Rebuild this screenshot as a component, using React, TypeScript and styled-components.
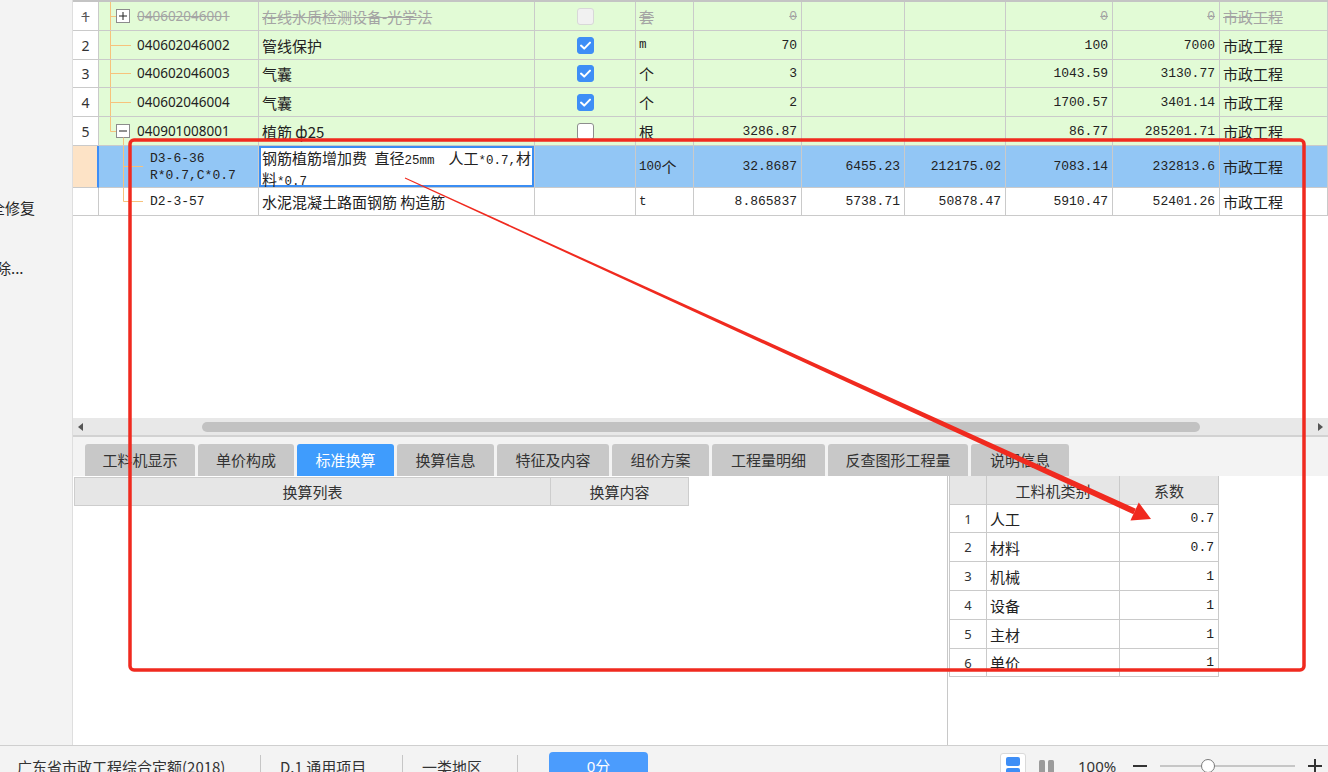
import React from 'react'
import styled, { createGlobalStyle } from 'styled-components'

const CJK = `"Noto Sans CJK SC", "Noto Sans", sans-serif`
const SANS = `"Noto Sans", "Noto Sans CJK SC", sans-serif`
const MONO = `"Liberation Mono", "Noto Sans CJK SC", monospace`

const GRID = '#cacaca'
const TREE = '#f7c27c'
const GREEN = '#e2fbd6'
const SELECTED = '#92c6f5'
const BLUE = '#3e8ef6'
const RED = '#f02a1f'

const COLS = [26, 160, 276, 101, 58, 108, 103, 101, 107, 107, 108]

const GlobalStyle = createGlobalStyle`
  html, body {
    margin: 0;
    padding: 0;
    width: 1328px;
    height: 772px;
    overflow: hidden;
    background: #fff;
  }
  body {
    font-family: ${SANS};
    color: #222;
  }
  * { box-sizing: border-box; }
`

const Page = styled.div`
  width: 1328px;
  height: 772px;
  display: flex;
  flex-direction: column;
  overflow: hidden;
`

const Workspace = styled.div`
  display: flex;
  height: 746px;
  flex: none;
  border-bottom: 1px solid #cfcfcf;
`

const Sidebar = styled.div`
  width: 73px;
  flex: none;
  background: #f3f3f3;
  border-right: 1px solid #dedede;
  padding-top: 198px;
  display: flex;
  flex-direction: column;
  gap: 40px;
  overflow: hidden;
`

const SideItem = styled.div<{ $shift: number }>`
  margin-left: ${(p) => p.$shift}px;
  font-family: ${CJK};
  font-size: 15px;
  line-height: 20px;
  color: #262626;
  white-space: nowrap;
`

const Main = styled.div`
  flex: 1;
  min-width: 0;
  display: flex;
  flex-direction: column;
`

const GridArea = styled.div`
  height: 418px;
  flex: none;
  border-top: 2px solid #c4c4c4;
  background: #fff;
  overflow: hidden;
`

const GridRow = styled.div<{ $h: number; $bg: string }>`
  display: grid;
  grid-template-columns: ${COLS.map((c) => c + 'px').join(' ')};
  height: ${(p) => p.$h}px;
  background: ${(p) => p.$bg};
`

type Align = 'left' | 'right' | 'center'
type Face = 'mono' | 'sans' | 'cjk'

const Cell = styled.div<{ $align?: Align; $font?: Face; $struck?: boolean }>`
  display: flex;
  align-items: center;
  justify-content: ${(p) => (p.$align === 'right' ? 'flex-end' : p.$align === 'center' ? 'center' : 'flex-start')};
  padding: ${(p) => (p.$align === 'right' ? '0 4px 0 0' : p.$align === 'center' ? '0' : '0 0 0 3px')};
  border-right: 1px solid ${GRID};
  border-bottom: 1px solid ${GRID};
  font-family: ${(p) => (p.$font === 'mono' ? MONO : p.$font === 'sans' ? SANS : CJK)};
  font-size: ${(p) => (p.$font === 'mono' ? '13px' : p.$font === 'sans' ? '13px' : '15px')};
  color: ${(p) => (p.$struck ? '#a4a4a4' : '#222')};
  text-decoration: ${(p) => (p.$struck ? 'line-through' : 'none')};
  white-space: nowrap;
  overflow: hidden;
`

const NoCell = styled(Cell)<{ $selected?: boolean }>`
  background: ${(p) => (p.$selected ? '#fde3c6' : '#fff')};
  border-right: ${(p) => (p.$selected ? `2px solid ${BLUE}` : `1px solid ${GRID}`)};
  font-family: ${SANS};
  font-size: 14px;
  color: ${(p) => (p.$struck ? '#555' : '#333')};
`

const CodeCell = styled(Cell)`
  padding: 0;
  align-items: stretch;
`

const CodeText = styled.div<{ $mono?: boolean; $struck?: boolean }>`
  align-self: center;
  font-family: ${(p) => (p.$mono ? MONO : SANS)};
  font-size: ${(p) => (p.$mono ? '13px' : '13.5px')};
  line-height: 17px;
  color: ${(p) => (p.$struck ? '#a4a4a4' : '#222')};
`

const EditCell = styled(Cell)`
  padding: 0;
  align-items: stretch;
`

const EditBox = styled.div`
  flex: 1;
  border: 2px solid #3b8ef3;
  background: #fff;
  padding: 1px 1px 0 1px;
  font-family: ${CJK};
  font-size: 15px;
  line-height: 17px;
  color: #222;
  display: flex;
  flex-direction: column;
`

const EditLine = styled.div`
  display: flex;
  justify-content: space-between;
  white-space: pre;
`

const Latin = styled.span`
  font-family: ${MONO};
  font-size: 12.5px;
`

const Box = styled.span<{ $state: 'on' | 'off' | 'disabled' }>`
  width: 17px;
  height: 17px;
  border-radius: 3px;
  display: flex;
  align-items: center;
  justify-content: center;
  background: ${(p) => (p.$state === 'on' ? BLUE : p.$state === 'off' ? '#fff' : '#f1f1f1')};
  border: 1px solid ${(p) => (p.$state === 'on' ? BLUE : p.$state === 'off' ? '#8d8d8d' : '#d8d8d8')};
`

const HScroll = styled.div`
  height: 19px;
  flex: none;
  background: #e8e8e8;
  border-bottom: 2px solid #d2d2d2;
  display: flex;
  align-items: center;
  padding: 0 5px;
`

const ArrowLeft = styled.span`
  width: 0;
  height: 0;
  border-top: 4px solid transparent;
  border-bottom: 4px solid transparent;
  border-right: 5px solid #555;
`

const ArrowRight = styled.span`
  margin-left: auto;
  width: 0;
  height: 0;
  border-top: 4px solid transparent;
  border-bottom: 4px solid transparent;
  border-left: 5px solid #555;
`

const Thumb = styled.span`
  margin-left: 119px;
  width: 998px;
  height: 10px;
  border-radius: 5px;
  background: #c2c2c2;
`

const TabBar = styled.div`
  height: 39px;
  flex: none;
  background: #f3f3f3;
  display: flex;
  align-items: flex-end;
  gap: 3px;
  padding-left: 12px;
`

const Tab = styled.div<{ $active?: boolean; $w: number }>`
  width: ${(p) => p.$w}px;
  height: 32px;
  flex: none;
  text-align: center;
  font-family: ${CJK};
  font-size: 15px;
  line-height: 31px;
  color: ${(p) => (p.$active ? '#fff' : '#333')};
  background: ${(p) => (p.$active ? '#3f9cfd' : '#c8c8c8')};
  border-radius: 3px 3px 0 0;
  white-space: nowrap;
`

const Bottom = styled.div`
  height: 269px;
  flex: none;
  display: flex;
  background: #fff;
`

const ListPane = styled.div`
  width: 875px;
  flex: none;
  border-right: 1px solid #c8c8c8;
  padding: 1px 0 0 1px;
`

const ListHead = styled.div`
  display: grid;
  grid-template-columns: 477px 138px;
  height: 29px;
`

const HeadCell = styled.div`
  display: flex;
  align-items: center;
  justify-content: center;
  background: #e6e6e6;
  border: 1px solid #cdcdcd;
  border-left: none;
  font-family: ${CJK};
  font-size: 15px;
  color: #333;
  &:first-child {
    border-left: 1px solid #cdcdcd;
  }
`

const FactorPane = styled.div`
  flex: 1;
  padding-left: 1px;
`

const FactorGrid = styled.div`
  display: grid;
  grid-template-columns: 37px 133px 99px;
  grid-template-rows: 29px 28px 29px 29px 29px 29px 28px;
  width: 269px;
  border-left: 1px solid ${GRID};
`

const FactorHead = styled.div`
  display: flex;
  align-items: center;
  justify-content: center;
  background: #e6e6e6;
  border-right: 1px solid ${GRID};
  border-bottom: 1px solid ${GRID};
  font-family: ${CJK};
  font-size: 15px;
  color: #333;
`

const FactorCell = styled(Cell)`
  background: #fff;
`

const IndexCell = styled(Cell)`
  font-family: ${SANS};
  font-size: 13px;
  color: #333;
`

const StatusBar = styled.div`
  height: 40px;
  flex: none;
  background: #f3f3f3;
  display: flex;
  align-items: center;
  font-family: ${CJK};
  font-size: 15px;
  color: #333;
`

const StatusText = styled.div<{ $w: number; $pl: number }>`
  width: ${(p) => p.$w}px;
  padding-left: ${(p) => p.$pl}px;
  flex: none;
  white-space: nowrap;
`

const StatusSep = styled.span`
  width: 1px;
  height: 22px;
  flex: none;
  background: #c6c6c6;
`

const ScoreButton = styled.div`
  margin-left: 31px;
  width: 99px;
  height: 28px;
  flex: none;
  border-radius: 4px;
  background: #4b9cfd;
  color: #fff;
  text-align: center;
  line-height: 28px;
  font-family: ${SANS};
`

const Tools = styled.div`
  margin-left: auto;
  padding-right: 6px;
  display: flex;
  align-items: center;
`

const ViewToggle = styled.div`
  width: 26px;
  height: 26px;
  background: #fff;
  border: 1px solid #dadada;
  border-radius: 3px;
  display: flex;
  justify-content: center;
  padding-top: 3px;
`

const Gap = styled.span<{ $w: number }>`
  width: ${(p) => p.$w}px;
  flex: none;
`

const ZoomText = styled.span`
  width: 40px;
  font-family: ${SANS};
  font-size: 15px;
  color: #333;
`

const Slider = styled.div`
  position: relative;
  width: 135px;
  height: 14px;
  display: flex;
  align-items: center;
`

const SliderTrack = styled.span`
  width: 100%;
  height: 2px;
  background: #c6c6c6;
`

const SliderKnob = styled.span`
  position: absolute;
  left: 41px;
  top: 0;
  width: 14px;
  height: 14px;
  border-radius: 50%;
  background: #fff;
  border: 1.5px solid #7a7a7a;
`

const Overlay = styled.svg`
  position: fixed;
  left: 0;
  top: 0;
  width: 1328px;
  height: 772px;
  pointer-events: none;
`

type TreeKind = 'plus' | 'branch' | 'minus' | 'child' | 'last'

type Bill = {
  no: string
  tree: TreeKind
  code: string[]
  name?: string
  check?: 'on' | 'off' | 'disabled'
  unit: string
  vals: string[]
  kind: string
  h: number
  tone: 'green' | 'selected' | 'plain'
  struck?: boolean
  editing?: boolean
}

const bills: Bill[] = [
  { no: '1', tree: 'plus', code: ['040602046001'], name: '在线水质检测设备-光学法', check: 'disabled', unit: '套', vals: ['0', '', '', '0', '0'], kind: '市政工程', h: 29, tone: 'green', struck: true },
  { no: '2', tree: 'branch', code: ['040602046002'], name: '管线保护', check: 'on', unit: 'm', vals: ['70', '', '', '100', '7000'], kind: '市政工程', h: 29, tone: 'green' },
  { no: '3', tree: 'branch', code: ['040602046003'], name: '气囊', check: 'on', unit: '个', vals: ['3', '', '', '1043.59', '3130.77'], kind: '市政工程', h: 28, tone: 'green' },
  { no: '4', tree: 'branch', code: ['040602046004'], name: '气囊', check: 'on', unit: '个', vals: ['2', '', '', '1700.57', '3401.14'], kind: '市政工程', h: 29, tone: 'green' },
  { no: '5', tree: 'minus', code: ['040901008001'], name: '植筋 ф25', check: 'off', unit: '根', vals: ['3286.87', '', '', '86.77', '285201.71'], kind: '市政工程', h: 29, tone: 'green' },
  { no: '', tree: 'child', code: ['D3-6-36', 'R*0.7,C*0.7'], editing: true, unit: '100个', vals: ['32.8687', '6455.23', '212175.02', '7083.14', '232813.6'], kind: '市政工程', h: 42, tone: 'selected' },
  { no: '', tree: 'last', code: ['D2-3-57'], name: '水泥混凝土路面钢筋 构造筋', unit: 't', vals: ['8.865837', '5738.71', '50878.47', '5910.47', '52401.26'], kind: '市政工程', h: 28, tone: 'plain' },
]

const tabs: [string, number][] = [
  ['工料机显示', 110],
  ['单价构成', 96],
  ['标准换算', 97],
  ['换算信息', 97],
  ['特征及内容', 112],
  ['组价方案', 97],
  ['工程量明细', 113],
  ['反查图形工程量', 140],
  ['说明信息', 98],
]

const factors = [
  ['1', '人工', '0.7'],
  ['2', '材料', '0.7'],
  ['3', '机械', '1'],
  ['4', '设备', '1'],
  ['5', '主材', '1'],
  ['6', '单价', '1'],
]

function Mixed({ text }: { text: string }) {
  const parts = text.split(/([\x20-\x7e]+)/).filter(Boolean)
  return (
    <>
      {parts.map((part, i) =>
        /^[\x20-\x7e]+$/.test(part) ? <Latin key={i}>{part}</Latin> : <span key={i}>{part}</span>
      )}
    </>
  )
}

function Tree({ kind, h }: { kind: TreeKind; h: number }) {
  const m = Math.floor(h / 2) + 0.5
  const child = kind === 'child' || kind === 'last'
  const w = child ? 51 : 38
  return (
    <svg width={w} height={h} style={{ flex: 'none' }}>
      {kind === 'plus' || kind === 'branch' ? <line x1={11.5} y1={0} x2={11.5} y2={h} stroke={TREE} /> : null}
      {kind === 'minus' ? <line x1={11.5} y1={0} x2={11.5} y2={m} stroke={TREE} /> : null}
      {kind === 'branch' ? <line x1={11.5} y1={m} x2={32} y2={m} stroke={TREE} /> : null}
      {kind === 'plus' || kind === 'minus' ? (
        <>
          <line x1={11.5} y1={m} x2={17} y2={m} stroke={TREE} />
          <rect x={17.5} y={m - 7} width={13} height={13} fill="#fff" stroke="#8c8c8c" />
          <line x1={20} y1={m - 0.5} x2={28} y2={m - 0.5} stroke="#222" />
          {kind === 'plus' ? <line x1={24} y1={m - 4.5} x2={24} y2={m + 3.5} stroke="#222" /> : null}
        </>
      ) : null}
      {kind === 'minus' ? <line x1={24.5} y1={m + 6} x2={24.5} y2={h} stroke={TREE} /> : null}
      {kind === 'child' ? <line x1={24.5} y1={0} x2={24.5} y2={h} stroke={TREE} /> : null}
      {kind === 'last' ? <line x1={24.5} y1={0} x2={24.5} y2={m} stroke={TREE} /> : null}
      {child ? <line x1={24.5} y1={m} x2={44} y2={m} stroke={TREE} /> : null}
    </svg>
  )
}

function CheckBox({ state }: { state: 'on' | 'off' | 'disabled' }) {
  return (
    <Box $state={state}>
      {state === 'on' ? (
        <svg width="11" height="9" viewBox="0 0 11 9">
          <path d="M1 4.6 L4.2 7.6 L10 1.6" stroke="#fff" strokeWidth="2" fill="none" strokeLinecap="round" strokeLinejoin="round" />
        </svg>
      ) : null}
    </Box>
  )
}

function BillRow({ bill }: { bill: Bill }) {
  const bg = bill.tone === 'green' ? GREEN : bill.tone === 'selected' ? SELECTED : '#fff'
  const child = bill.tree === 'child' || bill.tree === 'last'
  return (
    <GridRow $h={bill.h} $bg={bg}>
      <NoCell $align="center" $selected={bill.tone === 'selected'} $struck={bill.struck}>
        {bill.no}
      </NoCell>
      <CodeCell>
        <Tree kind={bill.tree} h={bill.h - 1} />
        <CodeText $mono={child} $struck={bill.struck}>
          {bill.code.map((c) => (
            <div key={c} style={bill.struck ? { textDecoration: 'line-through' } : undefined}>
              {c}
            </div>
          ))}
        </CodeText>
      </CodeCell>
      {bill.editing ? (
        <EditCell>
          <EditBox>
            <EditLine>
              <span>
                <Mixed text="钢筋植筋增加费 直径25mm" />
              </span>
              <span>
                <Mixed text="人工*0.7,材" />
              </span>
            </EditLine>
            <EditLine>
              <span>
                <Mixed text="料*0.7" />
              </span>
            </EditLine>
          </EditBox>
        </EditCell>
      ) : (
        <Cell $font="cjk" $struck={bill.struck}>
          {bill.name}
        </Cell>
      )}
      <Cell $align="center">{bill.check ? <CheckBox state={bill.check} /> : null}</Cell>
      <Cell $font="cjk" $struck={bill.struck}>
        <Mixed text={bill.unit} />
      </Cell>
      {bill.vals.map((v, i) => (
        <Cell key={i} $align="right" $font="mono" $struck={bill.struck}>
          {v}
        </Cell>
      ))}
      <Cell $font="cjk" $struck={bill.struck}>
        {bill.kind}
      </Cell>
    </GridRow>
  )
}

export default function App() {
  return (
    <>
      <GlobalStyle />
      <Page>
        <Workspace>
          <Sidebar>
            <SideItem $shift={-10}>全修复</SideItem>
            <SideItem $shift={-19}>删除...</SideItem>
          </Sidebar>
          <Main>
            <GridArea>
              {bills.map((b, i) => (
                <BillRow key={i} bill={b} />
              ))}
            </GridArea>
            <HScroll>
              <ArrowLeft />
              <Thumb />
              <ArrowRight />
            </HScroll>
            <TabBar>
              {tabs.map(([t, w]) => (
                <Tab key={t} $w={w} $active={t === '标准换算'}>
                  {t}
                </Tab>
              ))}
            </TabBar>
            <Bottom>
              <ListPane>
                <ListHead>
                  <HeadCell>换算列表</HeadCell>
                  <HeadCell>换算内容</HeadCell>
                </ListHead>
              </ListPane>
              <FactorPane>
                <FactorGrid>
                  <FactorHead />
                  <FactorHead>工料机类别</FactorHead>
                  <FactorHead>系数</FactorHead>
                  {factors.map(([n, name, k]) => (
                    <React.Fragment key={n}>
                      <IndexCell $align="center">{n}</IndexCell>
                      <FactorCell $font="cjk">{name}</FactorCell>
                      <FactorCell $align="right" $font="mono">
                        {k}
                      </FactorCell>
                    </React.Fragment>
                  ))}
                </FactorGrid>
              </FactorPane>
            </Bottom>
          </Main>
        </Workspace>
        <StatusBar>
          <StatusText $w={260} $pl={17}>
            广东省市政工程综合定额(2018)
          </StatusText>
          <StatusSep />
          <StatusText $w={141} $pl={19}>
            D.1 通用项目
          </StatusText>
          <StatusSep />
          <StatusText $w={114} $pl={19}>
            一类地区
          </StatusText>
          <StatusSep />
          <ScoreButton>0分</ScoreButton>
          <Tools>
            <ViewToggle>
              <svg width="14" height="22" viewBox="0 0 14 22">
                <rect x="0" y="0" width="14" height="9" rx="2" fill={BLUE} />
                <rect x="0" y="11" width="14" height="9" rx="2" fill={BLUE} />
              </svg>
            </ViewToggle>
            <Gap $w={13} />
            <svg width="15" height="20" viewBox="0 0 15 20" style={{ marginTop: 8 }}>
              <rect x="0" y="0" width="6" height="20" rx="1.5" fill="#9b9b9b" />
              <rect x="9" y="0" width="6" height="20" rx="1.5" fill="#9b9b9b" />
            </svg>
            <Gap $w={24} />
            <ZoomText>100%</ZoomText>
            <Gap $w={15} />
            <svg width="14" height="14" viewBox="0 0 14 14">
              <rect x="0" y="6" width="14" height="2" fill="#333" />
            </svg>
            <Gap $w={13} />
            <Slider>
              <SliderTrack />
              <SliderKnob />
            </Slider>
            <Gap $w={13} />
            <svg width="14" height="14" viewBox="0 0 14 14">
              <rect x="0" y="6" width="14" height="2" fill="#333" />
              <rect x="6" y="0" width="2" height="14" fill="#333" />
            </svg>
          </Tools>
        </StatusBar>
      </Page>
      <Overlay viewBox="0 0 1328 772">
        <rect x="130" y="140" width="1174" height="530" rx="4" fill="none" stroke={RED} strokeWidth="3.5" />
        <polygon points="404.8,178.45 405.2,177.55 1135.85,508.77 1133.35,514.23" fill={RED} />
        <polygon points="1130.45,520.6 1138.75,502.4 1151,519" fill={RED} />
      </Overlay>
    </>
  )
}
